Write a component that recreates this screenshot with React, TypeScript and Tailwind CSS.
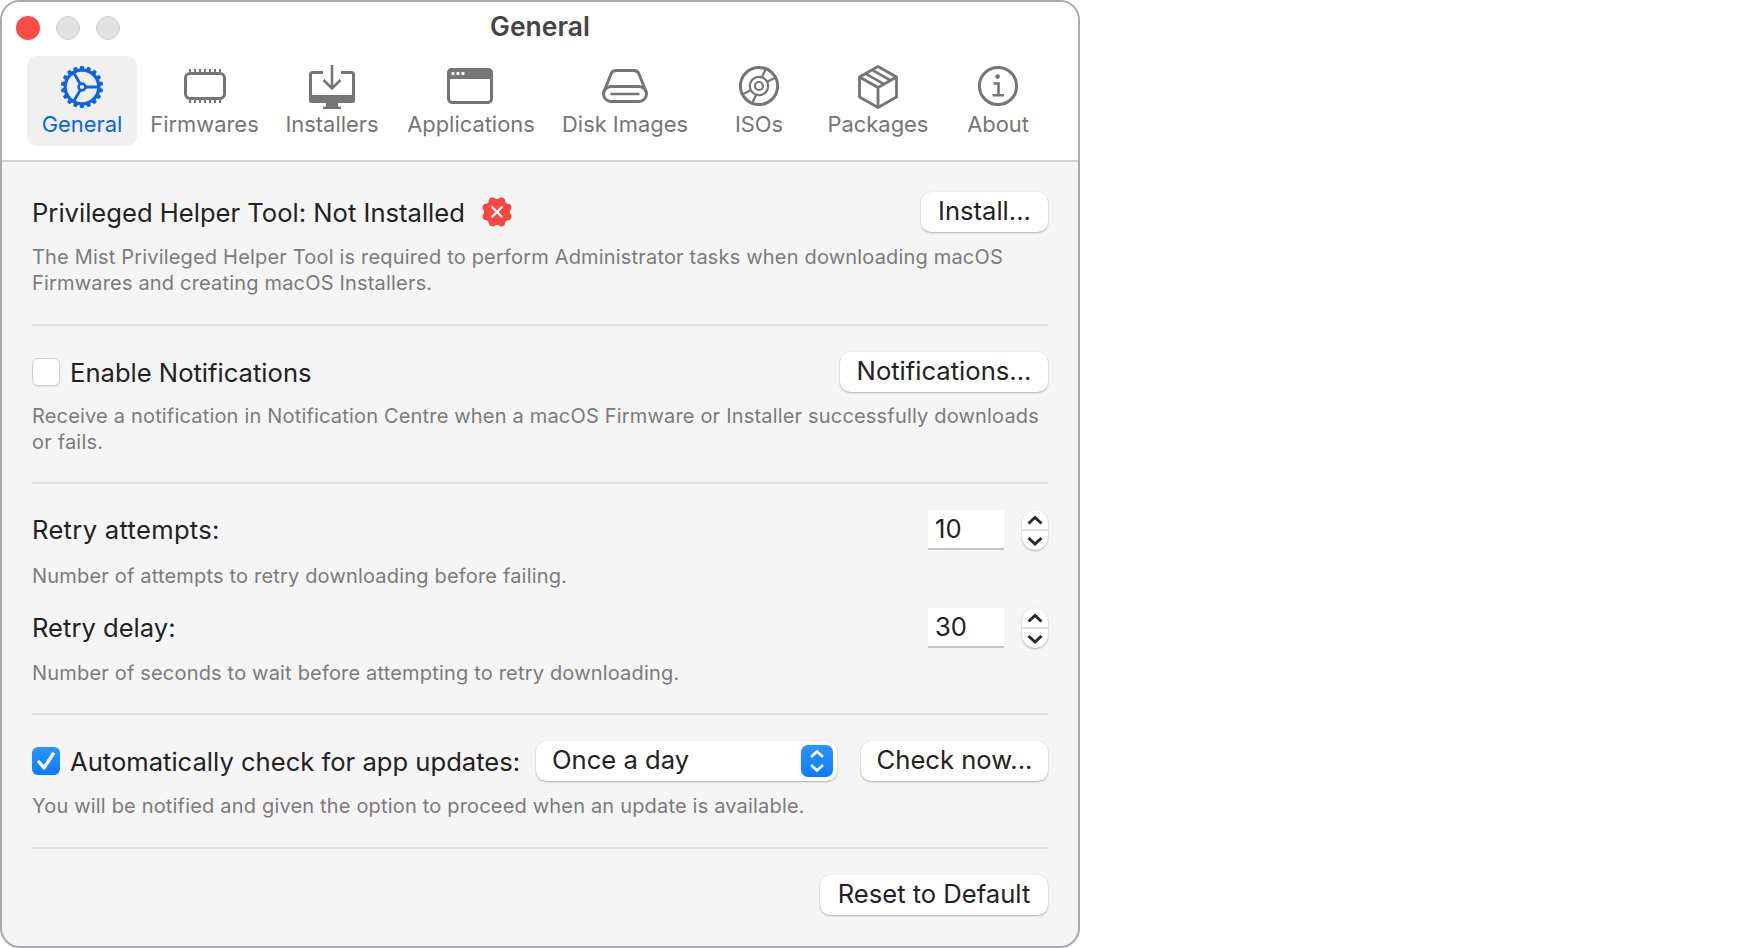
import React from "react";

const G = "#757575";
const B = "#0a64e8";

function Gear() {
  const teeth = Array.from({ length: 18 }, (_, i) => (i * 360) / 18);
  return (
    <svg width="48" height="48" viewBox="0 0 48 48" fill="none" stroke={B}>
      {teeth.map((a) => (
        <path key={a} d="M21.2 9L22.4 3.9H25.6L26.8 9Z" fill={B} stroke="none" transform={`rotate(${a} 24 25)`} />
      ))}
      <circle cx="24" cy="25" r="16.8" strokeWidth="3.2" />
      <circle cx="24" cy="25" r="3.4" strokeWidth="2.6" />
      <path d="M27.4 25H41M22.3 22L15.6 10.5M22.3 28L15.6 39.5" strokeWidth="2.8" />
    </svg>
  );
}
function Firmware() {
  return (
    <svg width="48" height="48" viewBox="0 0 48 48" fill="none" stroke={G}>
      <rect x="4.5" y="11.5" width="39" height="25" rx="4.5" strokeWidth="3" />
      <path d="M9 7V10M14 7V10M19 7V10M24 7V10M29 7V10M34 7V10M39 7V10M9 38V41M14 38V41M19 38V41M24 38V41M29 38V41M34 38V41M39 38V41" strokeWidth="2" />
    </svg>
  );
}
function Installer() {
  return (
    <svg width="48" height="48" viewBox="0 0 48 48" fill="none" stroke={G}>
      <path d="M15 10.5H4.5C3 10.5 2.5 11 2.5 12.5V37H45.5V12.5C45.5 11 45 10.5 43.5 10.5H33" strokeWidth="3" />
      <path d="M1 33H47V38.5C47 40 46 41 44.5 41H3.5C2 41 1 40 1 38.5Z" fill={G} stroke="none" />
      <path d="M18 41H30V44.5H33V47H15V44.5H18Z" fill={G} stroke="none" />
      <path d="M24 3V26.5M15.5 18L24 26.5L32.5 18" strokeWidth="2.6" />
    </svg>
  );
}
function AppWin() {
  return (
    <svg width="48" height="48" viewBox="0 0 48 48" fill="none">
      <g transform="translate(-1 0)">
        <rect x="2.5" y="7.5" width="43" height="33" rx="4" stroke={G} strokeWidth="3" />
        <path d="M1 11C1 8 3 6 6 6H42C45 6 47 8 47 11V17H1Z" fill={G} />
        <circle cx="7" cy="11.5" r="1.7" fill="#fff" />
        <circle cx="12" cy="11.5" r="1.7" fill="#fff" />
        <circle cx="17" cy="11.5" r="1.7" fill="#fff" />
      </g>
    </svg>
  );
}
function Disk() {
  return (
    <svg width="48" height="48" viewBox="0 0 48 48" fill="none" stroke={G} strokeWidth="3">
      <path d="M2.8 30L10 12C11 9.5 12.5 8.5 15 8.5H33C35.5 8.5 37 9.5 38 12L45.2 30" />
      <rect x="2.5" y="24.5" width="43" height="15" rx="7.5" />
      <path d="M9.5 32H38.5" strokeWidth="2.6" />
    </svg>
  );
}
function Iso() {
  return (
    <svg width="48" height="48" viewBox="0 0 48 48" fill="none" stroke={G}>
      <circle cx="24" cy="24" r="18.6" strokeWidth="3" />
      <circle cx="24" cy="24" r="9.2" strokeWidth="2.2" />
      <circle cx="24" cy="24" r="4" strokeWidth="2.2" />
      <path d="M27 15L31 6.5M32.5 19.5L41 15.5M15.5 28.5L7 32.5M21 33L17 41.5" strokeWidth="2.2" />
    </svg>
  );
}
function Pack() {
  return (
    <svg width="48" height="48" viewBox="0 0 48 48" fill="none" stroke={G} strokeWidth="2.8" strokeLinejoin="round">
      <path d="M24 4.5L42.5 15V35L24 45.5L5.5 35V15Z" />
      <path d="M5.5 15L24 25.5L42.5 15M24 25.5V45.5M11.5 11.6L30 22.1M18 7.9L36.5 18.4" />
    </svg>
  );
}
function About() {
  return (
    <svg width="48" height="48" viewBox="0 0 48 48" fill="none" stroke={G}>
      <circle cx="24" cy="24" r="18.6" strokeWidth="3" />
      <circle cx="23.6" cy="14.6" r="2.3" fill={G} stroke="none" />
      <path d="M19.5 21.5H24.5V33M18.5 33.2H30" strokeWidth="2.6" />
    </svg>
  );
}

const tabs = [
  { label: "General", w: "w-[110px]", icon: <Gear />, active: true },
  { label: "Firmwares", w: "w-[135px]", icon: <Firmware /> },
  { label: "Installers", w: "w-[120px]", icon: <Installer /> },
  { label: "Applications", w: "w-[158px]", icon: <AppWin /> },
  { label: "Disk Images", w: "w-[150px]", icon: <Disk /> },
  { label: "ISOs", w: "w-[118px]", icon: <Iso /> },
  { label: "Packages", w: "w-[120px]", icon: <Pack /> },
  { label: "About", w: "w-[120px]", icon: <About /> },
];

function Btn({ w, children }: { w: string; children: React.ReactNode }) {
  return (
    <div className={`${w} h-10 shrink-0 flex items-center justify-center pb-[3px] rounded-[10px] bg-white text-[25.6px] leading-none text-[#222] shadow-[0_1px_2px_rgba(0,0,0,0.28),0_0_1px_rgba(0,0,0,0.12)]`}>
      {children}
    </div>
  );
}

function Desc({ mt, children }: { mt: string; children: React.ReactNode }) {
  return <p className={`${mt} text-[20px] leading-[26px] tracking-[0.18px] whitespace-nowrap text-[#7b7b7b]`}>{children}</p>;
}

function Sep({ mt }: { mt: string }) {
  return <div className={`${mt} h-[2px] bg-[#dfdfdf]`} />;
}

function Stepper({ value }: { value: string }) {
  return (
    <div className="flex items-center">
      <div className="w-[76px] h-10 bg-white border-b-2 border-[#c4c4c4] pl-[7px] pb-px flex items-center text-[25.6px] leading-none text-[#222]">
        {value}
      </div>
      <div className="ml-[18px] w-[26px] h-10 rounded-[13px] bg-white shadow-[0_1px_2px_rgba(0,0,0,0.28),0_0_1px_rgba(0,0,0,0.12)] flex flex-col items-center">
        <svg width="26" height="19" viewBox="0 0 26 19" fill="none" stroke="#2a2a2a" strokeWidth="3">
          <path d="M6.5 13.5L13 7.5L19.5 13.5" />
        </svg>
        <div className="w-full h-[2px] bg-[#e3e3e3]" />
        <svg width="26" height="19" viewBox="0 0 26 19" fill="none" stroke="#2a2a2a" strokeWidth="3">
          <path d="M6.5 7L13 13L19.5 7" />
        </svg>
      </div>
    </div>
  );
}

function Badge() {
  const lobes = Array.from({ length: 8 }, (_, i) => (i * Math.PI) / 4);
  return (
    <svg width="32" height="32" viewBox="0 0 32 32" className="ml-[16px]">
      <circle cx="16" cy="16" r="13" fill="#fa4640" />
      {lobes.map((a, i) => (
        <circle key={i} cx={16 + 11.5 * Math.cos(a + Math.PI / 8)} cy={16 + 11.5 * Math.sin(a + Math.PI / 8)} r="3.8" fill="#fa4640" />
      ))}
      <path d="M11.2 11.2L20.8 20.8M20.8 11.2L11.2 20.8" stroke="#fff" strokeWidth="2.2" strokeLinecap="round" />
    </svg>
  );
}

export default function App() {
  return (
    <div className="w-[1750px] h-[948px] bg-white overflow-hidden font-['Inter','Liberation_Sans',sans-serif]">
      <div className="w-[1080px] h-[948px] rounded-[20px] border-2 border-[#a9a9ae] overflow-hidden bg-[#f5f5f5] flex flex-col">
        <header className="h-[160px] shrink-0 bg-white border-b-2 border-[#d4d4d4] flex flex-col">
          <div className="h-[54px] grid grid-cols-[1fr_auto_1fr] items-start">
            <div className="flex gap-[16px] pl-[14px] pt-[14px]">
              <span className="w-6 h-6 rounded-full bg-[#ff4b45]" />
              <span className="w-6 h-6 rounded-full bg-[#e2e2e2] border border-[#d0d0d0]" />
              <span className="w-6 h-6 rounded-full bg-[#e2e2e2] border border-[#d0d0d0]" />
            </div>
            <div className="pt-[9px] text-[26.5px] leading-[30px] font-semibold text-[#444]">General</div>
            <div />
          </div>
          <nav className="flex pl-[25px]">
            {tabs.map((t) => (
              <div
                key={t.label}
                className={`${t.w} h-[90px] pt-[6px] flex flex-col items-center rounded-[10px] ${t.active ? "bg-[#f0f0f0]" : ""}`}
              >
                {t.icon}
                <span className={`mt-px text-[21.9px] leading-[26px] whitespace-nowrap ${t.active ? "text-[#0a64e8]" : "text-[#757575]"}`}>
                  {t.label}
                </span>
              </div>
            ))}
          </nav>
        </header>

        <main className="px-[30px] pt-[30px] text-[25.6px] text-[#222]">
          <div className="h-10 flex items-center justify-between">
            <div className="flex items-center">
              <span className="pt-[2px]">Privileged Helper Tool: Not Installed</span>
              <Badge />
            </div>
            <Btn w="w-[127px]">Install...</Btn>
          </div>
          <Desc mt="mt-3">
            The Mist Privileged Helper Tool is required to perform Administrator tasks when downloading macOS
            <br />
            Firmwares and creating macOS Installers.
          </Desc>
          <Sep mt="mt-[28px]" />

          <div className="mt-[26px] h-10 flex items-center justify-between">
            <div className="flex items-center">
              <span className="w-7 h-7 rounded-[6px] bg-white border border-[#cfcfcf] shadow-[0_1px_1px_rgba(0,0,0,0.08)]" />
              <span className="ml-[10px] pt-[2px]">Enable Notifications</span>
            </div>
            <Btn w="w-[208px]">Notifications...</Btn>
          </div>
          <Desc mt="mt-[11px]">
            Receive a notification in Notification Centre when a macOS Firmware or Installer successfully downloads
            <br />
            or fails.
          </Desc>
          <Sep mt="mt-[27px]" />

          <div className="mt-[26px] h-10 flex items-center justify-between">
            <span className="pt-px tracking-[0.3px]">Retry attempts:</span>
            <Stepper value="10" />
          </div>
          <Desc mt="mt-[13px]">Number of attempts to retry downloading before failing.</Desc>
          <div className="mt-[19px] h-10 flex items-center justify-between">
            <span className="pt-px">Retry delay:</span>
            <Stepper value="30" />
          </div>
          <Desc mt="mt-3">Number of seconds to wait before attempting to retry downloading.</Desc>
          <Sep mt="mt-[27px]" />

          <div className="mt-[26px] h-10 flex items-center justify-between">
            <div className="flex items-center">
              <span className="w-7 h-7 rounded-[6px] bg-gradient-to-b from-[#2a96ff] to-[#0a7bff] flex items-center justify-center">
                <svg width="22" height="22" viewBox="0 0 22 22" fill="none" stroke="#fff" strokeWidth="3.4" strokeLinecap="round" strokeLinejoin="round">
                  <path d="M4 12L9 18L18 4" />
                </svg>
              </span>
              <span className="ml-[10px] pt-[2px]">Automatically check for app updates:</span>
            </div>
            <div className="flex items-center gap-[24px]">
              <div className="w-[301px] h-10 rounded-[10px] bg-white shadow-[0_1px_2px_rgba(0,0,0,0.28),0_0_1px_rgba(0,0,0,0.12)] flex items-center justify-between pl-[16px] pr-[4px] text-[25.6px] leading-none">
                <span className="pb-[3px]">Once a day</span>
                <span className="w-8 h-8 rounded-[7px] bg-gradient-to-b from-[#2a96ff] to-[#0a7bff] flex items-center justify-center">
                  <svg width="18" height="26" viewBox="0 0 18 26" fill="none" stroke="#fff" strokeWidth="2.6">
                    <path d="M3 9L9 3.5L15 9M3 17L9 22.5L15 17" />
                  </svg>
                </span>
              </div>
              <Btn w="w-[187px]">Check now...</Btn>
            </div>
          </div>
          <Desc mt="mt-3">You will be notified and given the option to proceed when an update is available.</Desc>
          <Sep mt="mt-[28px]" />

          <div className="mt-[26px] flex justify-end">
            <Btn w="w-[228px]">Reset to Default</Btn>
          </div>
        </main>
      </div>
    </div>
  );
}
